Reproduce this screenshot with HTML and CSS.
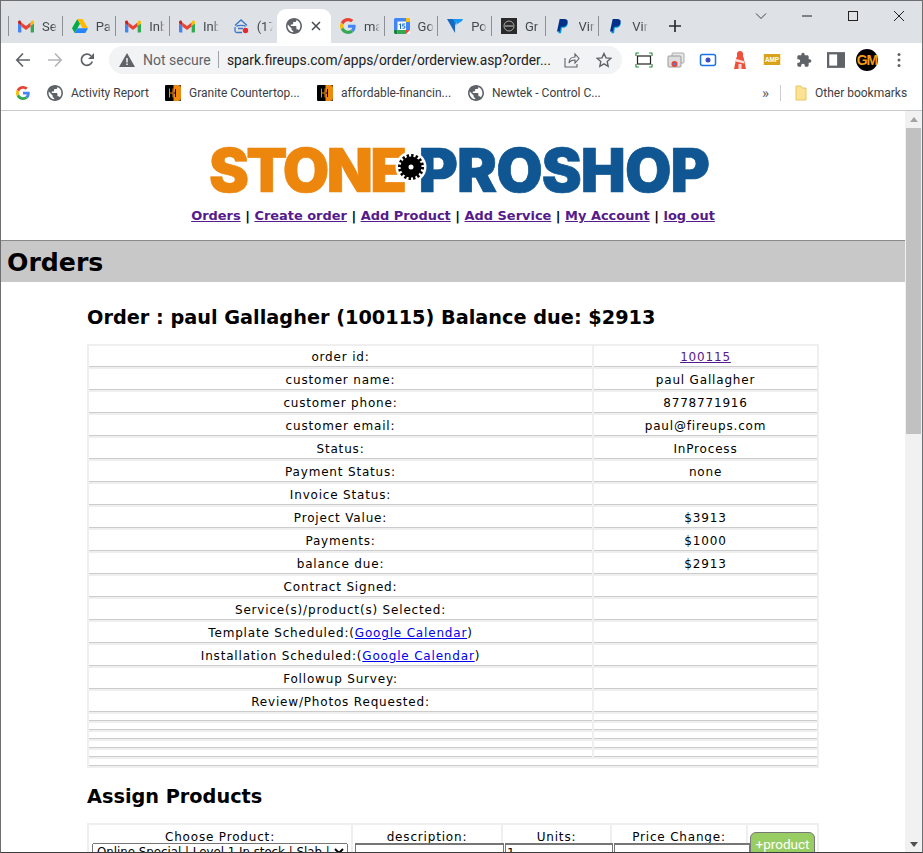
FILE: index.html
```html
<!DOCTYPE html>
<html lang="en">
<head>
<meta charset="utf-8">
<title>Orders</title>
<link rel="stylesheet" href="styles.css">
</head>
<body>
<svg class="defs" width="0" height="0" aria-hidden="true">
  <symbol id="i-gmail" viewBox="0 0 24 18">
    <path fill="#4285f4" d="M0 4v12.500C0 17.300.7 18 1.500 18H5V8z"/>
    <path fill="#34a853" d="M24 4v12.500c0 .8-.7 1.500-1.500 1.500H19V8z"/>
    <path fill="#ea4335" d="M5 3v6l7 5.200 7-5.200V3l-7 5.400z"/>
    <path fill="#c5221f" d="M0 4l5 4V3L3.800.5C2.300-.7 0 .4 0 2.400z"/>
    <path fill="#fbbc04" d="M24 4l-5 4V3L20.200.5C21.700-.7 24 .4 24 2.400z"/>
  </symbol>
  <symbol id="i-drive" viewBox="0 0 24 21">
    <path fill="#00ac47" d="M8 0 0 14l4 7 8-14z"/>
    <path fill="#ffba00" d="M8 0h8l8 14h-8z"/>
    <path fill="#2684fc" d="M8 14h16l-4 7H4z"/>
  </symbol>
  <symbol id="i-google" viewBox="0 0 48 48">
    <path fill="#EA4335" d="M24 9.500c3.540 0 6.710 1.220 9.210 3.600l6.850-6.850C35.900 2.380 30.470 0 24 0 14.620 0 6.510 5.380 2.560 13.220l7.980 6.190C12.430 13.720 17.740 9.500 24 9.500z"/>
    <path fill="#4285F4" d="M46.980 24.550c0-1.570-.15-3.090-.38-4.550H24v9.020h12.940c-.58 2.960-2.260 5.480-4.780 7.180l7.730 6c4.510-4.180 7.090-10.360 7.090-17.650z"/>
    <path fill="#FBBC05" d="M10.530 28.590c-.48-1.450-.76-2.990-.76-4.590s.27-3.140.76-4.590l-7.980-6.190C.92 16.460 0 20.120 0 24c0 3.880.92 7.540 2.560 10.780l7.970-6.190z"/>
    <path fill="#34A853" d="M24 48c6.480 0 11.930-2.130 15.890-5.810l-7.730-6c-2.150 1.450-4.920 2.300-8.160 2.300-6.260 0-11.570-4.220-13.470-9.910l-7.980 6.190C6.510 42.620 14.620 48 24 48z"/>
  </symbol>
  <symbol id="i-globe" viewBox="2 2 20 20">
    <path fill="#5f6368" d="M12 2C6.480 2 2 6.480 2 12s4.480 10 10 10 10-4.480 10-10S17.520 2 12 2zm-1 17.930c-3.950-.49-7-3.850-7-7.930 0-.62.08-1.210.21-1.790L9 15v1c0 1.100.9 2 2 2v1.930zm6.900-2.540c-.26-.81-1-1.390-1.900-1.390h-1v-3c0-.55-.45-1-1-1H8v-2h2c.55 0 1-.45 1-1V7h2c1.100 0 2-.9 2-2v-.41c2.930 1.190 5 4.060 5 7.410 0 2.080-.8 3.970-2.100 5.390z"/>
  </symbol>
  <symbol id="i-cal" viewBox="0 0 16 16">
    <rect width="16" height="16" rx="1.500" fill="#fff"/>
    <path fill="#4285f4" d="M0 1.500C0 .7.7 0 1.500 0H12v3.500H3.500V12H0z"/>
    <path fill="#fbbc04" d="M12 0h2.500c.8 0 1.500.7 1.500 1.500V4h-4z"/>
    <path fill="#4285f4" d="M12 4h4v8h-4z"/>
    <path fill="#34a853" d="M3.500 12H12v4H3.500z"/>
    <path fill="#188038" d="M0 12h3.500v4H1.500C.7 16 0 15.300 0 14.500z"/>
    <path fill="#ea4335" d="M12 12h4l-4 4z"/>
    <path fill="#1967d2" d="M4.800 6.400 6.400 5.400h.7v5.500H6V6.600l-1.200.7zM8.400 5.400h2.900v1H9.300l-.1 1.100c.9-.3 2.300 0 2.300 1.600 0 1.900-2.500 2.300-3.300.9l.9-.5c.3.700 1.400.5 1.400-.4 0-.8-1-1-1.500-.5l-.9-.3z"/>
  </symbol>
  <symbol id="i-paypal" viewBox="0 0 16 18">
    <path fill="#009cde" d="M13.500 4.500c.6 3.400-1.700 6-5.200 6H6.700L5.600 17H2.400l.3-2 2-11z"/>
    <path fill="#003087" d="M4 0h5.500c3 0 4.800 1.500 4 4.500-.8 3.300-3 4.700-6 4.700H5.400L4.300 15H.8z"/>
  </symbol>
  <symbol id="i-hotel" viewBox="0 0 16 16">
    <rect width="16" height="16" rx="1" fill="#000"/>
    <path fill="#ee8a10" d="M8.500 0H13a3 3 0 0 1 3 3v10a3 3 0 0 1-3 3H8.500z"/>
    <path fill="none" stroke="#ee8a10" stroke-width="1" d="M4.500 3.500v9M8 3.500v9M4.500 8H11"/>
    <path fill="none" stroke="#000" stroke-width="1" d="M10.500 4v8M8.500 8h2"/>
  </symbol>
</svg>

<div class="window">
  <header class="browser">
    <div class="tabstrip">
      <div class="tab sep"><svg class="fav gm"><use href="#i-gmail"/></svg><span class="tab-t">Se</span></div>
      <div class="tab sep"><svg class="fav"><use href="#i-drive"/></svg><span class="tab-t">Pa</span></div>
      <div class="tab sep"><svg class="fav gm"><use href="#i-gmail"/></svg><span class="tab-t">Inb</span></div>
      <div class="tab sep"><svg class="fav gm"><use href="#i-gmail"/></svg><span class="tab-t">Inb</span></div>
      <div class="tab">
        <svg class="fav" viewBox="0 0 16 16"><path fill="none" stroke="#3b78c4" stroke-width="1.300" d="M2 7.500 8 2l6 5.500M3.500 8.500c1-1.500 8-1.500 9 0M2 9v4c0 1 1 1.500 2 1.500h5M5 10.500h5"/><circle cx="12.500" cy="12.500" r="2.700" fill="#e8262b"/></svg>
        <span class="tab-t">(17</span>
      </div>
      <div class="tab active">
        <svg class="fav"><use href="#i-globe"/></svg>
        <svg class="tab-x" viewBox="0 0 10 10"><path d="M1 1l8 8M9 1l-8 8" stroke="#45494d" stroke-width="1.500"/></svg>
      </div>
      <div class="tab sep"><svg class="fav"><use href="#i-google"/></svg><span class="tab-t">ma</span></div>
      <div class="tab sep"><svg class="fav"><use href="#i-cal"/></svg><span class="tab-t">Go</span></div>
      <div class="tab sep">
        <svg class="fav" viewBox="0 0 16 14"><path fill="#1697f6" d="M8 6.500 4.500 0H16l-1 2z"/><path fill="#aeddff" d="M8 14 4.500 6.500 8 6.500l2-4z" opacity=".9"/><path fill="#1867c0" d="M0 0h6l2 4.500V14z"/></svg>
        <span class="tab-t">Po</span>
      </div>
      <div class="tab sep">
        <svg class="fav" viewBox="0 0 16 16"><rect width="16" height="16" fill="#2a2a2a"/><circle cx="8" cy="8" r="5" fill="none" stroke="#aaa" stroke-width="1"/><path d="M4 8h8" stroke="#ccc"/></svg>
        <span class="tab-t">Gr</span>
      </div>
      <div class="tab sep"><svg class="fav pp"><use href="#i-paypal"/></svg><span class="tab-t">Vir</span></div>
      <div class="tab sep"><svg class="fav pp"><use href="#i-paypal"/></svg><span class="tab-t">Vir</span></div>
      <svg class="newtab" viewBox="0 0 12 12"><path d="M6 0v12M0 6h12" stroke="#2b2e31" stroke-width="1.700"/></svg>
      <div class="winctl">
        <svg viewBox="0 0 12 12"><path d="M1 3.500 6 8.500l5-5" fill="none" stroke="#3c4043"/></svg>
        <svg viewBox="0 0 12 12"><path d="M1 6h10" stroke="#222" stroke-width="1"/></svg>
        <svg viewBox="0 0 12 12"><rect x="1.500" y="1.500" width="9" height="9" fill="none" stroke="#222"/></svg>
        <svg viewBox="0 0 12 12"><path d="M1 1l10 10M11 1 1 11" stroke="#222"/></svg>
      </div>
    </div>

    <div class="toolbar">
      <svg class="nav" viewBox="0 0 16 16"><path d="M15 8H2M8 1.500 1.800 8 8 14.500" fill="none" stroke="#5f6368" stroke-width="1.700"/></svg>
      <svg class="nav" viewBox="0 0 16 16"><path d="M1 8h13M8 1.500 14.200 8 8 14.500" fill="none" stroke="#b4b6b9" stroke-width="1.700"/></svg>
      <svg class="nav" viewBox="0 0 16 16"><path d="M13.300 9.500A5.600 5.600 0 1 1 12 3.800" fill="none" stroke="#5f6368" stroke-width="1.700"/><path d="M15 1v6H9z" fill="#5f6368"/></svg>
      <div class="omni">
        <svg class="warn" viewBox="0 0 16 14"><path fill="#5f6368" d="M8 0 16 14H0z"/><path fill="#fff" d="M7.300 5h1.400v4.500H7.300zM7.300 10.500h1.400V12H7.300z"/></svg>
        <span class="notsec">Not secure</span>
        <span class="omni-sep"></span>
        <span class="url">spark.fireups.com/apps/order/orderview.asp?order...</span>
        <svg class="omni-i share" viewBox="0 0 16 16"><path d="M1 6v9h12v-3M5 11c0-4 3-6 6-6V2l4 4.500L11 11V8c-3 0-5 1-6 3z" fill="none" stroke="#5f6368" stroke-width="1.100"/></svg>
        <svg class="omni-i star" viewBox="0 0 16 16"><path d="M8 1.500l2 4.400 4.800.5-3.600 3.200 1 4.700L8 11.900l-4.200 2.400 1-4.700L1.200 6.400 6 5.900z" fill="none" stroke="#5f6368" stroke-width="1.400"/></svg>
      </div>
      <div class="exts">
        <svg viewBox="0 0 18 16"><path d="M1 4V1h3M14 1h3v3M1 12v3h3M14 15h3v-3" fill="none" stroke="#2f8f3e" stroke-width="1.200"/><rect x="2.500" y="4" width="13" height="8" fill="#fff" stroke="#222" stroke-width="1.200"/></svg>
        <svg viewBox="0 0 18 16"><rect x="5" y="1" width="12" height="10" rx="1" fill="#e8e8e8" stroke="#aaa"/><rect x="1" y="4" width="13" height="11" rx="1" fill="#ddd" stroke="#999"/><circle cx="7.500" cy="12" r="3" fill="#ea4335"/><circle cx="7.500" cy="12" r="1.300" fill="#4285f4"/></svg>
        <svg viewBox="0 0 18 16"><rect x="1.500" y="2.500" width="15" height="11" rx="2" fill="#fff" stroke="#1a73e8" stroke-width="1.500"/><circle cx="9" cy="8" r="2.500" fill="#3c4fc0"/></svg>
        <svg class="house" viewBox="0 0 18 18"><path d="M3 18 5.500 6h7L15 18z" fill="#f0503a"/><path d="M5.200 8l7.600 2 .4 2.500L4.700 10.500z" fill="#fde1dc"/><path d="M6 6V3a3 3 0 0 1 6 0v3z" fill="#f0503a"/><rect x="7.500" y="13" width="3" height="5" fill="#fde1dc"/></svg>
        <svg viewBox="0 0 18 12" class="amp"><rect width="18" height="12" fill="#d9a21b"/><text x="9" y="9" class="amp-t" text-anchor="middle">AMP</text></svg>
        <svg viewBox="0 0 24 24"><path fill="#5f6368" d="M20.500 11H19V7c0-1.100-.9-2-2-2h-4V3.500C13 2.120 11.880 1 10.500 1S8 2.120 8 3.500V5H4c-1.100 0-1.990.9-1.990 2v3.800H3.500c1.490 0 2.700 1.210 2.700 2.700s-1.210 2.700-2.700 2.700H2V20c0 1.100.9 2 2 2h3.800v-1.500c0-1.490 1.210-2.700 2.700-2.700 1.490 0 2.700 1.210 2.700 2.700V22H17c1.100 0 2-.9 2-2v-4h1.500c1.380 0 2.500-1.120 2.500-2.500S21.880 11 20.500 11z"/></svg>
        <svg viewBox="0 0 16 14"><rect x="1" y="1" width="14" height="12" fill="#fff" stroke="#5f6368" stroke-width="2"/><rect x="9" y="1" width="6" height="12" fill="#5f6368"/></svg>
        <span class="avatar">GM</span>
        <svg class="dots" viewBox="0 0 4 16"><circle cx="2" cy="2.500" r="1.500" fill="#5f6368"/><circle cx="2" cy="8" r="1.500" fill="#5f6368"/><circle cx="2" cy="13.500" r="1.500" fill="#5f6368"/></svg>
      </div>
    </div>

    <div class="bookmarks">
      <svg class="bm-g"><use href="#i-google"/></svg>
      <a class="bm bm-1"><svg class="bm-i"><use href="#i-globe"/></svg>Activity Report</a>
      <a class="bm bm-2"><svg class="bm-i"><use href="#i-hotel"/></svg>Granite Countertop...</a>
      <a class="bm bm-3"><svg class="bm-i"><use href="#i-hotel"/></svg>affordable-financin...</a>
      <a class="bm bm-4"><svg class="bm-i"><use href="#i-globe"/></svg>Newtek - Control C...</a>
      <span class="chev">»</span>
      <span class="bm-sep"></span>
      <a class="bm bm-other"><svg class="bm-i" viewBox="0 0 14 16"><path d="M2 1h5l1 2h4v12H2z" fill="#fde293" stroke="#e8c65c"/></svg>Other bookmarks</a>
    </div>
  </header>

  <div class="viewport">
    <main class="page">
      <div class="logo">
        <span class="logo-a">STONE</span>
        <span class="logo-b">PROSHOP</span>
        <svg class="gear" viewBox="0 0 32 32">
          <circle cx="16" cy="16" r="15.500" fill="#fff"/>
          <circle cx="16" cy="16" r="11.500" fill="none" stroke="#000" stroke-width="3" stroke-dasharray="2.400 2.100"/>
          <circle cx="16" cy="16" r="10.500" fill="#000"/>
          <circle cx="16" cy="16" r="2.500" fill="#fff"/>
        </svg>
      </div>
      <nav class="menu">
        <a href="#">Orders</a> | <a href="#">Create order</a> | <a href="#">Add Product</a> | <a href="#">Add Service</a> | <a href="#">My Account</a> | <a href="#">log out</a>
      </nav>
      <h1 class="title">Orders</h1>
      <section class="content">
        <h2 class="h-order">Order : paul Gallagher (100115) Balance due: $2913</h2>
        <table class="grid info">
          <tr><td>order id:</td><td><a class="visited" href="#">100115</a></td></tr>
          <tr><td>customer name:</td><td>paul Gallagher</td></tr>
          <tr><td>customer phone:</td><td>8778771916</td></tr>
          <tr><td>customer email:</td><td>paul@fireups.com</td></tr>
          <tr><td>Status:</td><td>InProcess</td></tr>
          <tr><td>Payment Status:</td><td>none</td></tr>
          <tr><td>Invoice Status:</td><td></td></tr>
          <tr><td>Project Value:</td><td>$3913</td></tr>
          <tr><td>Payments:</td><td>$1000</td></tr>
          <tr><td>balance due:</td><td>$2913</td></tr>
          <tr><td>Contract Signed:</td><td></td></tr>
          <tr><td>Service(s)/product(s) Selected:</td><td></td></tr>
          <tr><td>Template Scheduled:(<a class="link" href="#">Google Calendar</a>)</td><td></td></tr>
          <tr><td>Installation Scheduled:(<a class="link" href="#">Google Calendar</a>)</td><td></td></tr>
          <tr><td>Followup Survey:</td><td></td></tr>
          <tr><td>Review/Photos Requested:</td><td></td></tr>
          <tr class="thin"><td></td><td></td></tr>
          <tr class="thin"><td></td><td></td></tr>
          <tr class="thin"><td></td><td></td></tr>
          <tr class="thin"><td></td><td></td></tr>
          <tr class="thin"><td></td><td></td></tr>
          <tr class="thin"><td colspan="2"></td></tr>
        </table>
        <h2 class="h-assign">Assign Products</h2>
        <table class="grid assign">
          <tr>
            <td class="c1"><span class="lbl">Choose Product:</span><select class="sel"><option>Online Special | Level 1 In stock | Slab | Granite</option></select></td>
            <td class="c2"><span class="lbl">description:</span><input class="fld f2" type="text"></td>
            <td class="c3"><span class="lbl">Units:</span><input class="fld f3" type="text" value="1"></td>
            <td class="c4"><span class="lbl">Price Change:</span><input class="fld f4" type="text"></td>
            <td class="c5"><button class="add" type="button">+product</button></td>
          </tr>
        </table>
      </section>
    </main>
    <div class="scrollbar">
      <span class="arrow up"></span>
      <span class="thumb"></span>
      <span class="arrow down"></span>
    </div>
  </div>
</div>
</body>
</html>
```
FILE: styles.css
```css
html, body { margin: 0; padding: 0; height: 100%; overflow: hidden; background: #fff; }
.defs { position: absolute; }
.window {
  box-sizing: border-box; width: 923px; height: 853px;
  border: 1px solid #6d6e70; border-bottom-color: #3c3c3c;
  display: flex; flex-direction: column; overflow: hidden;
}
.browser { flex: none; font-family: Roboto, "Open Sans", sans-serif; font-size: 12px; color: #3c4043; }

/* tabs */
.tabstrip { height: 42px; background: #dee1e6; display: flex; align-items: flex-end; padding-left: 8px; position: relative; }
.tab { box-sizing: border-box; flex: 0 0 53.67px; height: 34px; display: flex; align-items: center; padding: 0 0 0 9px; position: relative; }
.tab.sep::before { content: ""; position: absolute; left: -1px; top: 7px; height: 20px; width: 1px; background: #8d9094; }
.tab.active + .tab.sep::before { display: none; }
.tab.active { background: #fff; border-radius: 9px 9px 0 0; }
.fav { width: 16px; height: 16px; flex: none; }
.fav.gm { height: 13px; }
.fav.pp { height: 15px; }
.tab-t {
  margin-left: 8px; width: 16px; overflow: hidden; white-space: nowrap; color: #45494d; font-size: 13px;
  -webkit-mask-image: linear-gradient(90deg, #000 65%, transparent);
  mask-image: linear-gradient(90deg, #000 65%, transparent);
}
.tab-x { width: 10px; height: 10px; margin-left: 9px; }
.newtab { width: 12px; height: 12px; margin: 0 0 11px 16px; flex: none; }
.winctl { position: absolute; top: 9px; right: 0; display: flex; }
.winctl svg { width: 12px; height: 12px; margin-right: 34px; }
.winctl svg:last-child { margin-right: 17px; }

/* toolbar */
.toolbar { height: 33px; background: #fff; display: flex; align-items: center; padding-left: 14px; }
.nav { width: 16px; height: 16px; margin-right: 16px; flex: none; }
.omni { box-sizing: border-box; margin-left: -2px; width: 513px; height: 28px; flex: none; background: #f1f3f4; border-radius: 14px; display: flex; align-items: center; padding-left: 10px; font-size: 14px; }
.warn { width: 16px; height: 14px; flex: none; }
.notsec { margin-left: 8px; color: #5f6368; width: 67px; white-space: nowrap; }
.omni-sep { width: 1px; height: 17px; background: #a0a3a7; margin: 0 8px; flex: none; }
.url { color: #202124; width: 327px; white-space: nowrap; font-size: 13.8px; flex: none; }
.omni-i { width: 16px; height: 16px; flex: none; }
.share { margin-left: 10px; }
.star { margin-left: 16px; }
.exts { display: flex; align-items: center; margin-left: 13px; }
.exts svg { width: 18px; height: 16px; margin-right: 14px; flex: none; }
.exts .amp { height: 11px; }
.exts .house { height: 18px; }
.amp-t { font: bold 7px "Liberation Sans", sans-serif; fill: #fff; }
.avatar { width: 22px; height: 22px; border-radius: 50%; background: #000; color: #f39c12; font: bold 14px/22px "Liberation Sans", sans-serif; text-align: center; margin: 0 19px 0 -3px; letter-spacing: -1px; flex: none; }
.exts .dots { width: 4px; height: 16px; margin: 0; }

/* bookmarks */
.bookmarks { box-sizing: border-box; height: 35px; background: #fff; border-bottom: 1px solid #c8cacc; display: flex; align-items: center; padding-left: 15px; white-space: nowrap; }
.bm-g { width: 14px; height: 14px; flex: none; margin-right: 17px; }
.bm { display: flex; align-items: center; color: #3c4043; font-size: 12px; }
.bm-i { width: 16px; height: 16px; margin-right: 8px; flex: none; }
.bm-1 { width: 118px; }
.bm-2 { width: 152px; }
.bm-3 { width: 151px; }
.bm-4 { width: 294px; }
.chev { width: 15px; font-size: 15px; color: #5f6368; margin-right: 3px; }
.bm-sep { width: 1px; height: 16px; background: #ccc; margin-right: 12px; }
.bm-other .bm-i { margin-right: 6px; }

/* page */
.viewport { flex: 1; min-height: 0; display: flex; overflow: hidden; }
.page { flex: 1; min-width: 0; overflow: hidden; font-family: "DejaVu Sans", Verdana, sans-serif; color: #000; }
.logo { position: relative; display: flex; justify-content: center; gap: 14px; padding: 37px 0 0 12px; height: 45px; font-family: Inter, Roboto, sans-serif; font-weight: 900; font-size: 60px; line-height: 45px; -webkit-text-stroke: .7px currentColor; }
.logo-a { color: #ec860c; letter-spacing: -2.6px; }
.logo-b { color: #0f5692; letter-spacing: -.9px; }
.gear { position: absolute; left: 394px; top: 40px; width: 32px; height: 32px; }
.menu { text-align: center; margin-top: 14px; font-size: 12.95px; font-weight: bold; line-height: 18px; height: 33px; }
.menu a { color: #551a8b; }
.title { margin: 0; height: 42px; box-sizing: border-box; border-top: 1px solid #8a8a8a; background: #c8c8c8; font-size: 25.2px; line-height: 41px; padding: 1px 0 0 6px; font-weight: bold; }
.content { padding-left: 86px; }
.h-order { margin: 0; padding-top: 23px; height: 39px; font-size: 19.3px; line-height: 26px; }
.grid { width: 732px; table-layout: fixed; border-collapse: separate; border-spacing: 2px; background: #efefef; font-size: 12px; letter-spacing: .82px; text-align: center; }
.grid td { padding: 0; background: #fff; }
.info td { height: 21px; padding-top: 2px; border-bottom: 1px solid #ccc; box-sizing: border-box; line-height: 18px; }
.info td:first-child { width: 503px; }
.info .thin td { height: 7px; padding-top: 0; }
.visited { color: #551a8b; }
.link { color: #0000ee; }
.h-assign { margin: 0; padding-top: 16px; height: 39px; font-size: 19.3px; line-height: 26px; }
.assign { height: 60px; }
.assign td { vertical-align: top; line-height: 14px; padding-top: 5px; }
.lbl { display: block; margin-bottom: -1px; }
.c1 { width: 262px; }
.c2 { width: 148px; }
.c3 { width: 107px; }
.c4 { width: 134px; }
.sel { display: block; box-sizing: border-box; width: 256px; height: 17px; margin: 0 auto; padding: 0; font: 11.8px "DejaVu Sans", sans-serif; }
.fld { display: inline-block; vertical-align: top; box-sizing: border-box; height: 18px; margin: 0 0 0 2px; font: 12px "DejaVu Sans", sans-serif; border: 1px solid #767676; border-top-width: 2px; padding: 0 1px; background: #fff; }
.f2 { width: 149px; }
.f3 { width: 108px; }
.f4 { width: 136px; }
.add { display: block; margin: 2px auto 0; width: 65px; height: 30px; background: #98cd63; color: #fff; border: 1px solid #777; border-radius: 6px; padding: 0 0 4px; font: 13.5px/1 Roboto, sans-serif; }

/* scrollbar */
.scrollbar { flex: none; width: 17px; background: #f1f1f1; display: flex; flex-direction: column; align-items: center; }
.arrow { flex: none; width: 0; height: 0; border-left: 4px solid transparent; border-right: 4px solid transparent; }
.arrow.up { margin: 6px 0 6px; border-bottom: 5px solid #a3a3a3; }
.thumb { flex: none; width: 15px; height: 306px; background: #c1c1c1; }
.arrow.down { margin-top: auto; margin-bottom: 5px; border-top: 5px solid #505050; }
```
